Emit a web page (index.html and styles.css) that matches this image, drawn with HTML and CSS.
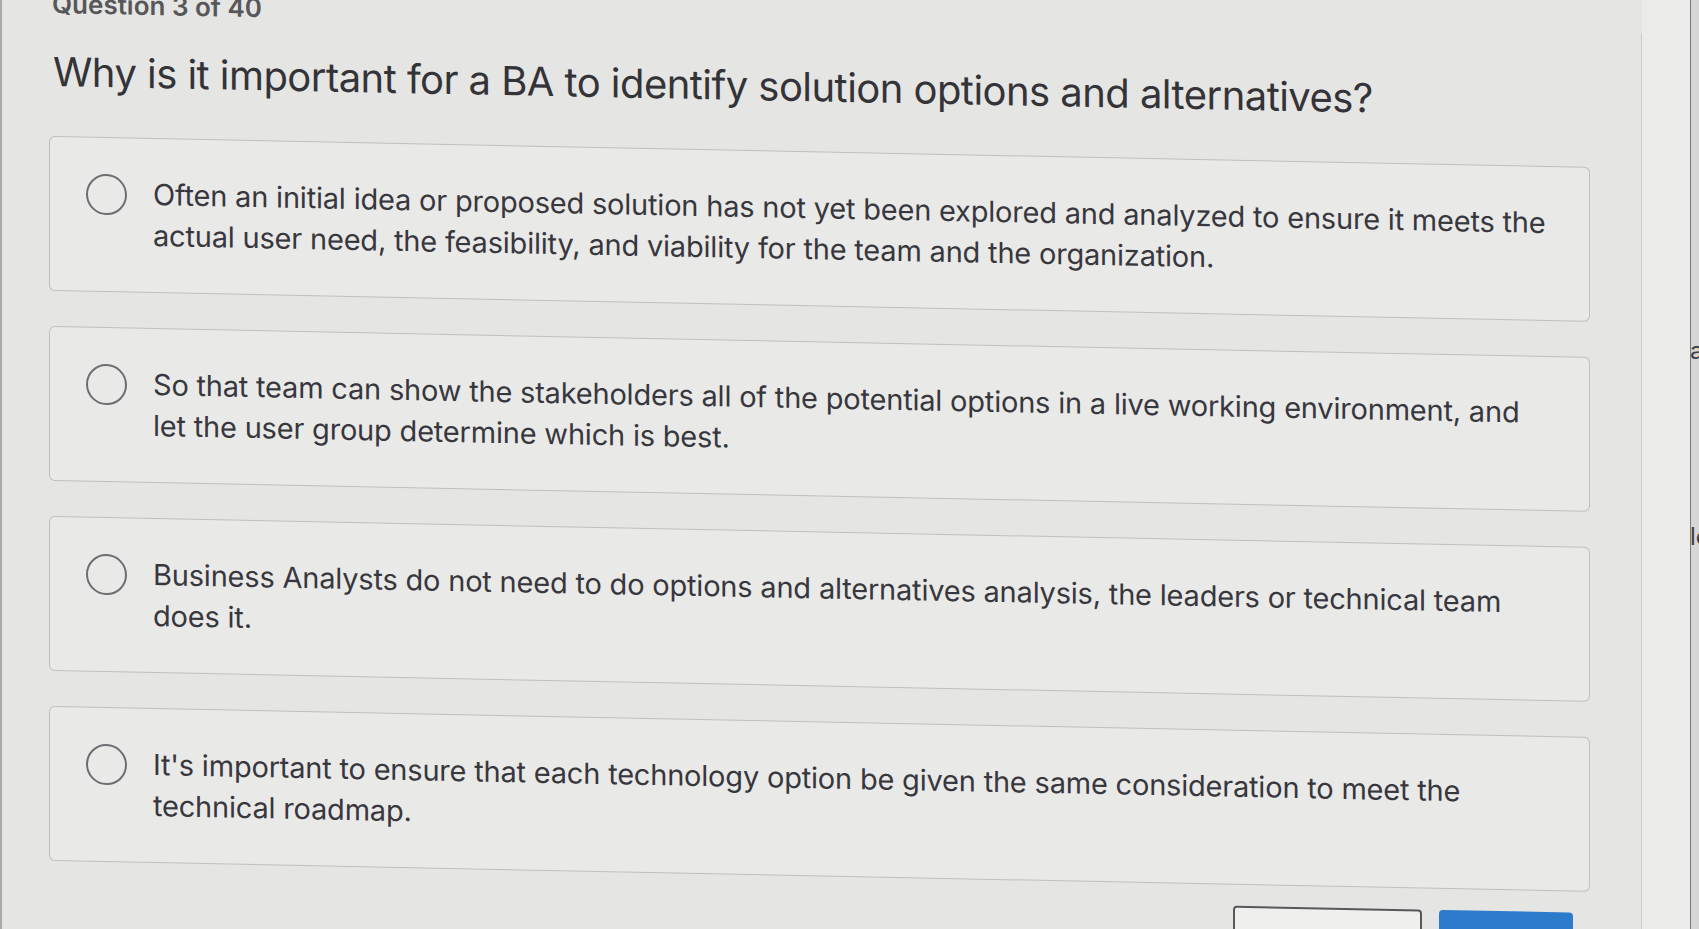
FILE: index.html
```html
<!DOCTYPE html>
<html lang="en">

<head>
    <meta charset="UTF-8">
    <meta name="viewport" content="width=device-width, initial-scale=1.0">
    <title>Question 3 of 40</title>
    <link rel="stylesheet" href="styles.css">
</head>

<body>
    <div class="page">
        <main class="quiz">
            <div class="counter">Question 3 of 40</div>
            <h1 class="question">Why is it important for a BA to identify solution options and alternatives?</h1>

            <div class="options">
                <label class="option">
                    <span class="radio"></span>
                    <span class="text">Often an initial idea or proposed solution has not yet been explored and analyzed to ensure it meets the<br>actual user need, the feasibility, and viability for the team and the organization.</span>
                </label>
                <label class="option">
                    <span class="radio"></span>
                    <span class="text">So that team can show the stakeholders all of the potential options in a live working environment, and<br>let the user group determine which is best.</span>
                </label>
                <label class="option">
                    <span class="radio"></span>
                    <span class="text">Business Analysts do not need to do options and alternatives analysis, the leaders or technical team<br>does it.</span>
                </label>
                <label class="option">
                    <span class="radio"></span>
                    <span class="text">It's important to ensure that each technology option be given the same consideration to meet the<br>technical roadmap.</span>
                </label>
            </div>

            <div class="actions">
                <button class="btn btn-outline"></button>
                <button class="btn btn-primary"></button>
            </div>
        </main>

        <aside class="side">
            <div class="side-edge">
                <span class="frag frag-a">a</span>
                <span class="frag frag-le">le</span>
            </div>
        </aside>
    </div>
</body>

</html>
```

FILE: styles.css
```css
html,
body {
    margin: 0;
    height: 100%;
}

body {
    background-color: #e5e5e3;
    font-family: 'Inter', 'Noto Sans', sans-serif;
    color: #37373d;
    overflow: hidden;
}

.page {
    display: flex;
    height: 929px;
    border-left: 2px solid #a9a9a9;
}

.quiz {
    width: 1640px;
    flex-shrink: 0;
    padding: 0 51px 0 47px;
    box-sizing: border-box;
    border-right: 1px solid #cdcdcb;
    transform: skewY(1.15deg);
    transform-origin: 0 0;
}

.counter {
    margin: -12px 0 0 3px;
    font-size: 26px;
    line-height: 30px;
    font-weight: 600;
    color: #57575a;
}

.question {
    margin: 29px 0 40px 4px;
    font-size: 40px;
    line-height: 48px;
    font-weight: 400;
    color: #333338;
    letter-spacing: -0.55px;
}

.options {
    display: flex;
    flex-direction: column;
    gap: 35px;
}

.option {
    display: flex;
    align-items: flex-start;
    gap: 26px;
    padding: 35px 30px 36px 36px;
    background-color: #e9e9e8;
    border: 1.5px solid #bfbfbe;
    border-radius: 6px;
    cursor: pointer;
}

.radio {
    flex-shrink: 0;
    width: 37px;
    height: 37px;
    margin-top: 1px;
    border: 2px solid #6e6e72;
    border-radius: 50%;
}

.text {
    font-size: 29px;
    line-height: 41px;
    letter-spacing: -0.2px;
    white-space: nowrap;
}

.actions {
    display: flex;
    justify-content: flex-end;
    gap: 17px;
    margin-top: 21px;
    padding-right: 17px;
}

.btn {
    height: 48px;
    border-radius: 4px;
    cursor: pointer;
}

.btn-outline {
    width: 189px;
    background-color: #efefee;
    border: 2px solid #58585a;
}

.btn-primary {
    width: 134px;
    background-color: #2e7bcc;
    border: none;
}

.side {
    flex: 1;
    display: flex;
    justify-content: flex-end;
    background-color: #ebebea;
}

.side-edge {
    width: 8px;
    position: relative;
    overflow: hidden;
    background-color: #d6d6d6;
    border-left: 1px solid #7a7a7c;
}

.frag {
    position: absolute;
    left: -1px;
    font-size: 24px;
    color: #3c3c42;
}

.frag-a {
    top: 336px;
}

.frag-le {
    top: 522px;
}
```
